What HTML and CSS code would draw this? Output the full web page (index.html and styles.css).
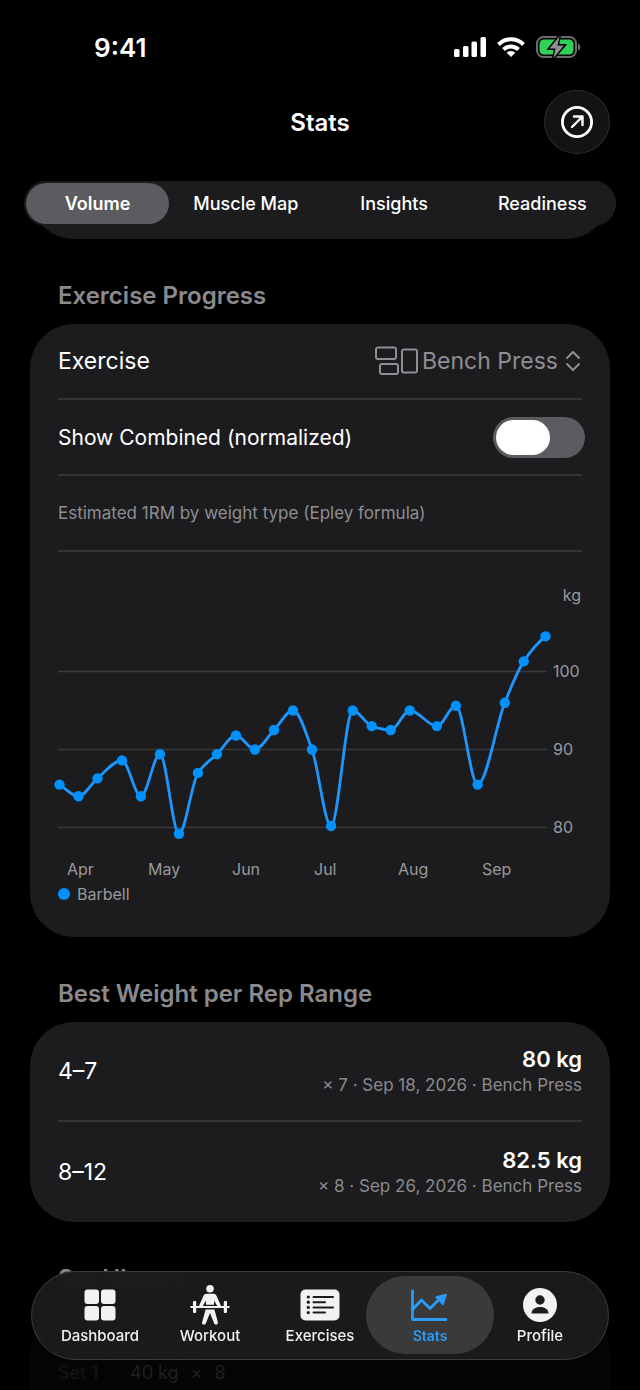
FILE: index.html
```html
<!DOCTYPE html>
<html lang="en">
<head>
    <meta charset="UTF-8">
    <meta name="viewport" content="width=device-width, initial-scale=1">
    <title>Stats</title>
    <link rel="stylesheet" href="styles.css">
</head>
<body>
    <div class="screen">
        <div class="status-bar">
            <span class="time">9:41</span>
            <div class="status-icons">
                <svg width="32" height="20" viewBox="0 0 32 20" fill="#fff">
                    <rect x="0" y="12" width="5.500" height="8" rx="1.500"/>
                    <rect x="9" y="9" width="5.500" height="11" rx="1.500"/>
                    <rect x="17.500" y="4.500" width="5.500" height="15.500" rx="1.500"/>
                    <rect x="26.500" y="0" width="5.500" height="20" rx="1.500"/>
                </svg>
                <svg width="28" height="20" viewBox="0 0 28 20">
                    <g fill="none" stroke="#fff" stroke-width="4">
                        <path d="M1.500 7.500a17.600 17.600 0 0 1 25 0"/>
                        <path d="M6.500 12.500a10.600 10.600 0 0 1 15 0"/>
                    </g>
                    <path d="M14 20l-4.300-4.300a6.200 6.200 0 0 1 8.600 0z" fill="#fff"/>
                </svg>
                <svg width="45" height="22" viewBox="0 0 45 22">
                    <rect x="1" y="1" width="39" height="20" rx="6.500" fill="none" stroke="#6b6b6e" stroke-width="2"/>
                    <path d="M42 7.500c3 .6 3 6.400 0 7z" fill="#6b6b6e"/>
                    <rect x="3.500" y="3.500" width="34" height="15" rx="4.500" fill="#30d158"/>
                    <path d="M23.500 0L13.500 12.500h6L17.500 22 28 9.500h-6.500z" fill="#8e8e93" stroke="#000" stroke-width="3" paint-order="stroke"/>
                </svg>
            </div>
        </div>

        <header class="header">
            <h1>Stats</h1>
            <button type="button" class="share" aria-label="Share">
                <svg width="34" height="34" viewBox="0 0 34 34" fill="none" stroke="#fff" stroke-width="2.800" stroke-linecap="round" stroke-linejoin="round">
                    <circle cx="17" cy="17" r="14.600"/>
                    <path d="M12 22l10.500-10.500M14 11.500h8.500V20" stroke-width="2.400"/>
                </svg>
            </button>
        </header>

        <main>
            <div class="segment-card">
                <div class="segments">
                    <button type="button" class="active">Volume</button>
                    <button type="button">Muscle Map</button>
                    <button type="button">Insights</button>
                    <button type="button">Readiness</button>
                </div>
            </div>

            <h2>Exercise Progress</h2>
            <section class="card">
                <div class="row">
                    <label for="exercise">Exercise</label>
                    <div class="picker">
                        <svg width="43" height="30" viewBox="0 0 43 30" fill="none" stroke="#8e8e93" stroke-width="2">
                            <rect x="1" y="1.500" width="20" height="11.500" rx="2"/>
                            <rect x="5" y="18" width="18" height="10" rx="2"/>
                            <rect x="27" y="3.500" width="15" height="23" rx="2"/>
                        </svg>
                        <select id="exercise">
                            <option>Bench Press</option>
                            <option>Squat</option>
                            <option>Deadlift</option>
                        </select>
                        <svg class="chevrons" width="14" height="20" viewBox="0 0 14 20" fill="none" stroke="#8e8e93" stroke-width="2" stroke-linecap="round" stroke-linejoin="round">
                            <path d="M1 7l6-6 6 6M1 13l6 6 6-6"/>
                        </svg>
                    </div>
                </div>
                <div class="row combined">
                    <label for="combined">Show Combined (normalized)</label>
                    <input type="checkbox" id="combined" class="toggle">
                </div>
                <div class="row note">Estimated 1RM by weight type (Epley formula)</div>
                <div class="chart">
                    <svg id="chart" viewBox="0 1 524 329">
                        <g class="axis">
                            <text x="523" y="50" text-anchor="end">kg</text>
                            <text x="495" y="126">100</text>
                            <text x="495" y="204">90</text>
                            <text x="495" y="282">80</text>
                            <text x="9" y="324">Apr</text>
                            <text x="90" y="324">May</text>
                            <text x="174" y="324">Jun</text>
                            <text x="256" y="324">Jul</text>
                            <text x="340" y="324">Aug</text>
                            <text x="424" y="324">Sep</text>
                        </g>
                        <path class="grid" d="M0 120.500h489M0 198.500h489M0 276.500h489"/>
                        <path class="line" id="line"/>
                        <g class="dots" id="dots"></g>
                    </svg>
                    <div class="legend"><span class="legend-dot"></span>Barbell</div>
                </div>
            </section>

            <h2>Best Weight per Rep Range</h2>
            <section class="card">
                <div class="row record">
                    <span>4–7</span>
                    <div class="best">
                        <strong>80 kg</strong>
                        <small>× 7 · Sep 18, 2026 · Bench Press</small>
                    </div>
                </div>
                <div class="row record">
                    <span>8–12</span>
                    <div class="best">
                        <strong>82.5 kg</strong>
                        <small>× 8 · Sep 26, 2026 · Bench Press</small>
                    </div>
                </div>
            </section>

            <h2>Set History</h2>
            <section class="card history">
                <h3>Sep 26, 2026</h3>
                <div class="set"><span class="set-name">Set 1</span><span>40 kg</span><span>×</span><span>8</span></div>
            </section>
        </main>

        <div class="fade"></div>
        <nav class="tab-bar">
            <a href="#dashboard" class="tab">
                <svg width="40" height="40" viewBox="0 0 40 40" fill="#f2f2f2">
                    <rect x="4.500" y="4.500" width="14.500" height="14.500" rx="3"/>
                    <rect x="21" y="4.500" width="14.500" height="14.500" rx="3"/>
                    <rect x="4.500" y="21" width="14.500" height="14.500" rx="3"/>
                    <rect x="21" y="21" width="14.500" height="14.500" rx="3"/>
                </svg>
                <span>Dashboard</span>
            </a>
            <a href="#workout" class="tab">
                <svg width="40" height="40" viewBox="0 0 40 40" fill="#f2f2f2">
                    <circle cx="20" cy="3.800" r="3.800"/>
                    <path d="M16.500 8.800h7c1.500 0 2.400.8 3 2l4.200 9.400c1 2.400-1.800 3.900-3 1.600L24 15.500v4.200h-8v-4.200l-3.700 6.300c-1.200 2.300-4 .8-3-1.600l4.200-9.400c.6-1.200 1.500-2 3-2z"/>
                    <path d="M0.500 21h39v2H0.500z"/>
                    <rect x="3" y="16" width="3.200" height="12" rx="1"/>
                    <rect x="33.800" y="16" width="3.200" height="12" rx="1"/>
                    <path d="M15.600 24.600h8.800l3.500 12.600c.6 2.600-3 3.400-3.800 1L20 28l-4.100 10.200c-.8 2.400-4.400 1.600-3.800-1z"/>
                </svg>
                <span>Workout</span>
            </a>
            <a href="#exercises" class="tab">
                <svg width="40" height="40" viewBox="0 0 40 40">
                    <rect x="0.500" y="4.500" width="39" height="31" rx="5" fill="#f2f2f2"/>
                    <g fill="#1c1c1e">
                        <circle cx="8.300" cy="12" r="1.600"/>
                        <circle cx="8.300" cy="17.200" r="1.600"/>
                        <circle cx="8.300" cy="22.400" r="1.600"/>
                        <circle cx="8.300" cy="27.600" r="1.600"/>
                    </g>
                    <path d="M13.500 12h19.500M13.500 17.200h11.500M13.500 22.400h19.500M13.500 27.600h11.500" stroke="#1c1c1e" stroke-width="2" stroke-linecap="round"/>
                </svg>
                <span>Exercises</span>
            </a>
            <a href="#stats" class="tab active">
                <svg width="40" height="40" viewBox="0 0 40 40" fill="none" stroke="#2b9bf8" stroke-width="2.800" stroke-linecap="round" stroke-linejoin="round">
                    <path d="M2.500 6v28.500h33.500M3 24l8.500-9 8.500 8.500 10.500-10.500"/>
                    <path d="M36 9.500L26 12l7 7.500z" fill="#2b9bf8" stroke-width="1.500"/>
                </svg>
                <span>Stats</span>
            </a>
            <a href="#profile" class="tab">
                <svg width="40" height="40" viewBox="0 0 40 40">
                    <circle cx="20" cy="20" r="17" fill="#f2f2f2"/>
                    <circle cx="20" cy="15" r="4.700" fill="#1c1c1e"/>
                    <path d="M11.500 28.500c0-4.200 4-6.500 8.500-6.500s8.500 2.300 8.500 6.500z" fill="#1c1c1e"/>
                </svg>
                <span>Profile</span>
            </a>
        </nav>
    </div>

    <script>
        // [days since first session, estimated 1RM in kg]
        const sessions = [
            [0, 85.5], [7, 84], [14, 86.3], [23, 88.6], [30, 84], [37, 89.4], [44, 79.2],
            [51, 87], [58, 89.4], [65, 91.8], [72, 90], [79, 92.5], [86, 95], [93, 90],
            [100, 80.2], [108, 95], [115, 93], [122, 92.5], [129, 95], [139, 93],
            [146, 95.6], [154, 85.5], [164, 96], [171, 101.3], [179, 104.5]
        ];
        const points = sessions.map(([day, kg]) => [1.5 + day * 2.715, 120.5 + (100 - kg) * 7.8]);

        // monotone cubic, so the curve never overshoots a session
        const slopes = points.slice(1).map((p, i) => (p[1] - points[i][1]) / (p[0] - points[i][0]));
        const tangents = points.map((p, i) => {
            if (i === 0) return slopes[0];
            if (i === points.length - 1) return slopes[i - 1] * 0.7;
            const a = slopes[i - 1], b = slopes[i];
            return a * b <= 0 ? 0 : 2 * a * b / (a + b);
        });

        let d = 'M' + points[0];
        for (let i = 1; i < points.length; i++) {
            const [x0, y0] = points[i - 1];
            const [x1, y1] = points[i];
            const h = (x1 - x0) / 3;
            d += ` C${x0 + h},${y0 + h * tangents[i - 1]} ${x1 - h},${y1 - h * tangents[i]} ${x1},${y1}`;
        }
        document.getElementById('line').setAttribute('d', d);
        document.getElementById('dots').innerHTML = points.map(([x, y]) => `<circle cx="${x}" cy="${y}" r="5.2"/>`).join('');
    </script>
</body>
</html>
```
FILE: styles.css
```css
* {
    box-sizing: border-box;
}
body {
    margin: 0;
    background: #000;
    color: #fff;
    font-family: Inter, "Liberation Sans", sans-serif;
    font-size: 23px;
}
h1, h2, h3 {
    margin: 0;
}
button {
    border: none;
    padding: 0;
    color: #fff;
    font-family: inherit;
    cursor: pointer;
}
svg {
    flex-shrink: 0;
}
.screen {
    height: 100vh;
    overflow: hidden;
}

/* status bar and header */
.status-bar {
    display: flex;
    align-items: center;
    justify-content: space-between;
    height: 90px;
    padding: 4px 59px 0 94px;
}
.time {
    font-size: 26px;
    font-weight: 600;
}
.status-icons {
    display: flex;
    align-items: center;
    gap: 11px;
}
.header {
    display: grid;
    grid-template-columns: 1fr auto 1fr;
    align-items: center;
    padding: 0 30px;
}
.header h1 {
    grid-column: 2;
    font-size: 24px;
    font-weight: 600;
}
.share {
    display: flex;
    align-items: center;
    justify-content: center;
    justify-self: end;
    width: 66px;
    height: 64px;
    border: 1px solid #2c2c2e;
    border-radius: 50%;
    background: #131313;
}

/* segmented control */
main {
    padding: 27px 30px 0;
}
.segment-card {
    height: 58px;
    border-radius: 14px 14px 44px 44px;
    background: #1c1c1e;
}
.segments {
    display: flex;
    gap: 5px;
    margin: 0 -6px;
    padding: 2px;
    border-radius: 22px;
    background: #1c1c1e;
}
.segments button {
    flex: 1;
    height: 41px;
    border-radius: 21px;
    background: none;
    font-size: 18px;
    font-weight: 500;
}
.segments .active {
    background: #5b5b60;
    font-weight: 600;
}

/* cards */
h2 {
    padding: 42px 28px 14px;
    color: #8a8a8e;
    font-size: 24px;
    font-weight: 600;
    line-height: 29px;
}
.card {
    padding: 0 28px;
    border-radius: 44px;
    background: #1c1c1e;
}
.row {
    display: flex;
    align-items: center;
    justify-content: space-between;
    height: 76px;
    border-bottom: 2px solid #353537;
}
.combined {
    font-size: 21px;
}
.note {
    color: #8e8e93;
    font-size: 17px;
}
.picker {
    display: flex;
    align-items: center;
    gap: 4px;
}
.picker select {
    appearance: none;
    border: none;
    padding: 0;
    background: none;
    color: #8e8e93;
    font-family: inherit;
    font-size: 23px;
}
.chevrons {
    margin: 0 2px 0 4px;
}
.toggle {
    appearance: none;
    width: 92px;
    height: 41px;
    margin: 0 -3px 0 0;
    padding: 3px;
    border-radius: 21px;
    background: #5b5b60;
    cursor: pointer;
}
.toggle::before {
    content: "";
    display: block;
    width: 54px;
    height: 35px;
    border-radius: 18px;
    background: #fff;
}
.toggle:checked {
    background: #30d158;
}
.toggle:checked::before {
    margin-left: 32px;
}

/* chart */
.chart {
    padding-bottom: 30px;
}
.chart svg {
    display: block;
    width: 100%;
    overflow: visible;
}
.axis {
    fill: #98989d;
    font-size: 16px;
}
.grid {
    stroke: #3a3a3c;
    stroke-width: 1.5;
}
.line {
    fill: none;
    stroke: #1e96fc;
    stroke-width: 2.8;
    stroke-linejoin: round;
}
.dots {
    fill: #0091ff;
}
.legend {
    display: flex;
    align-items: center;
    gap: 7px;
    height: 26px;
    color: #98989d;
    font-size: 16px;
}
.legend-dot {
    width: 12px;
    height: 12px;
    border-radius: 50%;
    background: #0091ff;
}

/* rep range records */
.record {
    height: 100px;
}
.record:last-child {
    border-bottom: none;
}
.best {
    display: flex;
    flex-direction: column;
    align-items: flex-end;
}
.best strong {
    font-size: 22px;
    font-weight: 600;
    line-height: 28px;
}
.best small {
    color: #8a8a8e;
    font-size: 17px;
    line-height: 24px;
}

/* set history */
.history {
    padding-top: 26px;
    height: 300px;
}
.history h3 {
    font-size: 22px;
    line-height: 26px;
}
.set {
    display: flex;
    gap: 12px;
    font-size: 18px;
    line-height: 28px;
    color: #98989d;
}
.set-name {
    width: 60px;
    color: #6b6b6e;
}

/* tab bar */
.fade {
    position: fixed;
    left: 0;
    right: 0;
    bottom: 0;
    height: 120px;
    background: linear-gradient(rgba(0, 0, 0, 0), rgba(0, 0, 0, 0.8) 40%);
}
.tab-bar {
    position: fixed;
    left: 31px;
    right: 31px;
    bottom: 30px;
    display: flex;
    padding: 4px 13px 5px;
    border: 1px solid #3c3c3e;
    border-radius: 45px;
    background: rgba(27, 27, 27, 0.95);
    backdrop-filter: blur(3px);
}
.tab {
    position: relative;
    display: flex;
    flex: 1;
    flex-direction: column;
    align-items: center;
    height: 78px;
    padding-top: 9px;
    color: #f2f2f2;
    font-size: 15px;
    font-weight: 500;
    line-height: 22px;
    text-decoration: none;
}
.tab svg,
.tab span {
    z-index: 1;
}
.tab.active {
    color: #2b9bf8;
    font-size: 14px;
    font-weight: 600;
}
.tab.active::before {
    content: "";
    position: absolute;
    inset: 0 -9px;
    border-radius: 39px;
    background: #3a3a3a;
}
```
